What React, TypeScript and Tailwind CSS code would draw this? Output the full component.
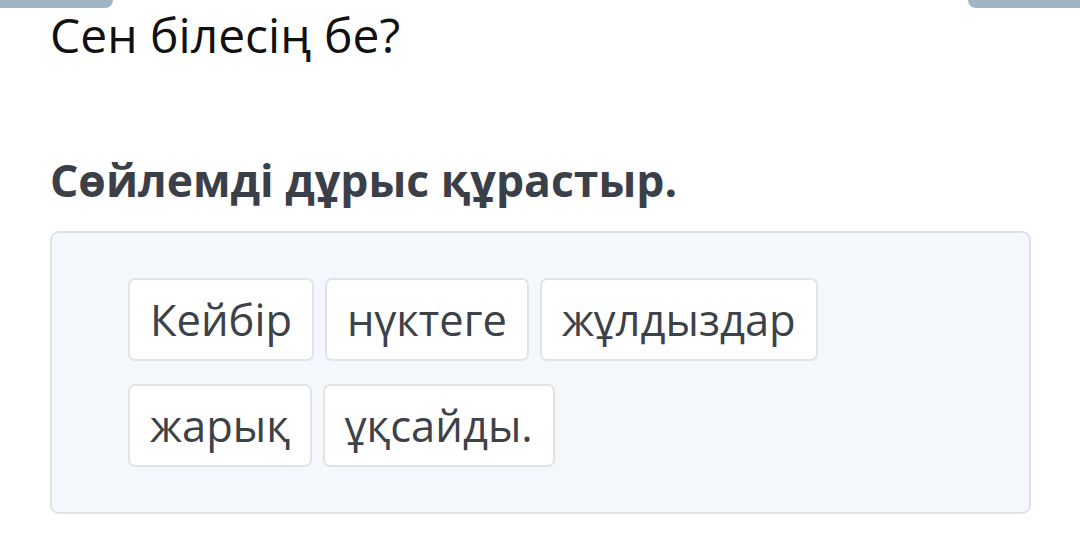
const words = [["Кейбір", "нүктеге", "жұлдыздар"], ["жарық", "ұқсайды."]];

export default function App() {
  return (
    <div className="relative h-[553px] w-[1080px] overflow-hidden bg-white font-['Open_Sans',sans-serif]">
      <div className="absolute left-0 top-0 h-[8px] w-[113px] rounded-br-[10px] bg-[#9fb4c4]" />
      <div className="absolute right-0 top-0 h-[8px] w-[112px] rounded-bl-[10px] bg-[#9fb4c4]" />
      <div className="px-[50px] pt-[6px]">
        <h1 className="text-[48px] leading-[58px] text-[#111]">Сен білесің бе?</h1>
        <h2 className="mt-[88px] text-[44.5px] font-bold leading-[56px] text-[#3b4048]">
          Сөйлемді дұрыс құрастыр.
        </h2>
        <div className="mt-[23px] flex w-[981px] flex-col gap-[23px] rounded-[9px] border-2 border-[#dde2e6] bg-[#f4f8fc] py-[45px] pl-[76px]">
          {words.map((row, i) => (
            <div key={i} className="flex gap-[11px]">
              {row.map((w) => (
                <div
                  key={w}
                  className="flex h-[83px] items-center rounded-[7px] border-2 border-[#e1e4e7] bg-white px-[20px] text-[43.5px] text-[#3d4249]"
                >
                  {w}
                </div>
              ))}
            </div>
          ))}
        </div>
      </div>
    </div>
  );
}
